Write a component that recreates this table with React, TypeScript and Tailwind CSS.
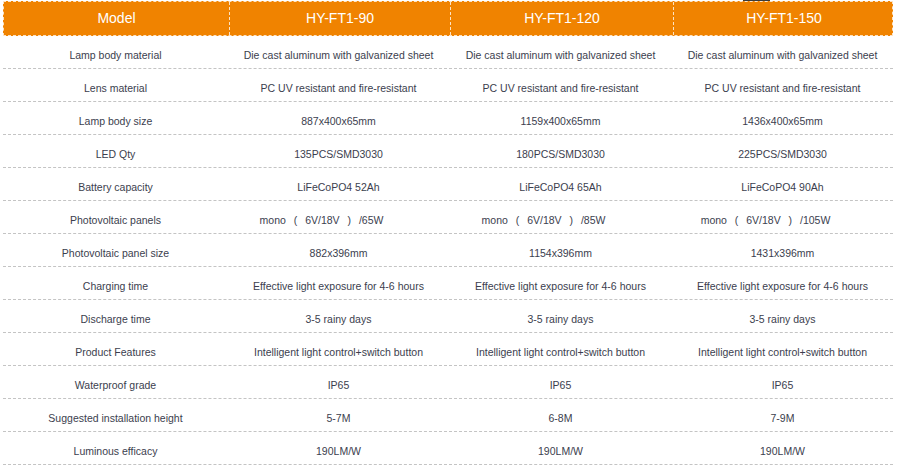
import React from "react";

const rows: [string, string, string, string][] = [
  ["Lamp body material", "Die cast aluminum with galvanized sheet", "Die cast aluminum with galvanized sheet", "Die cast aluminum with galvanized sheet"],
  ["Lens material", "PC UV resistant and fire-resistant", "PC UV resistant and fire-resistant", "PC UV resistant and fire-resistant"],
  ["Lamp body size", "887x400x65mm", "1159x400x65mm", "1436x400x65mm"],
  ["LED Qty", "135PCS/SMD3030", "180PCS/SMD3030", "225PCS/SMD3030"],
  ["Battery capacity", "LiFeCoPO4 52Ah", "LiFeCoPO4 65Ah", "LiFeCoPO4 90Ah"],
  ["Photovoltaic panels", "mono ( 6V/18V ) /65W", "mono ( 6V/18V ) /85W", "mono ( 6V/18V ) /105W"],
  ["Photovoltaic panel size", "882x396mm", "1154x396mm", "1431x396mm"],
  ["Charging time", "Effective light exposure for 4-6 hours", "Effective light exposure for 4-6 hours", "Effective light exposure for 4-6 hours"],
  ["Discharge time", "3-5 rainy days", "3-5 rainy days", "3-5 rainy days"],
  ["Product Features", "Intelligent light control+switch button", "Intelligent light control+switch button", "Intelligent light control+switch button"],
  ["Waterproof grade", "IP65", "IP65", "IP65"],
  ["Suggested installation height", "5-7M", "6-8M", "7-9M"],
  ["Luminous efficacy", "190LM/W", "190LM/W", "190LM/W"],
];

const headers = ["Model", "HY-FT1-90", "HY-FT1-120", "HY-FT1-150"];

export default function App() {
  return (
    <div
      className="relative w-[897px] h-[472px] bg-white pl-[3px] pt-[1px]"
      style={{ fontFamily: '"Liberation Sans", Arial, "Noto Sans CJK SC", sans-serif' }}
    >
      <div className="absolute left-[743px] top-0 w-[27px] h-[1px] bg-[#3a3a3a]" />
      <div className="w-[890px]">
        <div className="grid grid-cols-[225px_221px_223px_221px] h-[35px] bg-[#f08300] border border-dashed border-[#fde3c4]">
          {headers.map((h, i) => (
            <div
              key={h}
              className={`flex items-center justify-center text-white text-[14px] ${i > 0 ? "border-l border-dashed border-[#fde3c4]" : ""}`}
            >
              {h}
            </div>
          ))}
        </div>
        {rows.map((r) => {
          const shifted = r[0] === "Photovoltaic panels";
          return (
            <div
              key={r[0]}
              className="grid grid-cols-[225px_221px_223px_221px] h-[33px] border-b border-dashed border-[#c4c4c4]"
            >
              {r.map((c, i) => (
                <div
                  key={i}
                  className={`flex items-center justify-center pt-[8px] text-[10.5px] text-[#3b3e4e] whitespace-pre ${shifted && i > 0 ? "pr-[34px] [word-spacing:5px]" : ""}`}
                >
                  {c}
                </div>
              ))}
            </div>
          );
        })}
      </div>
    </div>
  );
}
